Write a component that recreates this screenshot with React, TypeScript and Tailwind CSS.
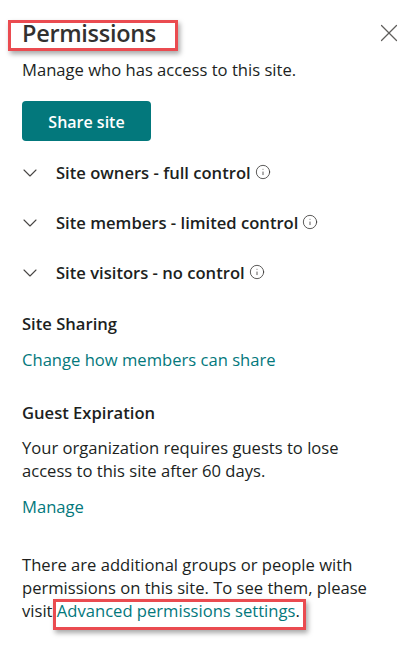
import { ChevronDown, Info, X } from "lucide-react";

const groups = [
  "Site owners - full control",
  "Site members - limited control",
  "Site visitors - no control",
];

function Callout({ className }: { className: string }) {
  return (
    <div
      className={`absolute border-[3px] border-[#ea4b50] shadow-[2px_3px_5px_rgba(0,0,0,0.35)] ${className}`}
    />
  );
}

export default function App() {
  return (
    <div className="relative h-[672px] w-[414px] overflow-hidden bg-white pl-[22px] pr-[10px] pt-[17px] font-['Open_Sans',sans-serif] text-[16.6px] text-[#201f1e]">
      <div className="flex h-[32px] items-center justify-between">
        <h1 className="pt-[1px] text-[23.5px] font-semibold tracking-[-0.3px] text-[#323130]">Permissions</h1>
        <X className="h-[30px] w-[30px] text-[#605e5c]" strokeWidth={0.95} />
      </div>

      <p className="mt-[9px] leading-[24px]">Manage who has access to this site.</p>

      <button className="mt-[19px] block h-[40px] w-[129px] rounded-[4px] bg-[#03787c] pt-[2px] text-[16px] font-semibold text-white">
        Share site
      </button>

      <ul className="mt-[20px] flex flex-col gap-[26px]">
        {groups.map((g) => (
          <li key={g} className="flex h-[24px] items-center font-semibold">
            <ChevronDown className="-ml-[4px] mr-[14px] h-[24px] w-[24px] text-[#484644]" strokeWidth={1.1} />
            <span>{g}</span>
            <Info className="mb-[3px] ml-[4px] h-[16px] w-[16px] text-[#323130]" strokeWidth={1.2} />
          </li>
        ))}
      </ul>

      <h2 className="mt-[27px] font-semibold leading-[24px]">Site Sharing</h2>
      <a className="mt-[12px] block leading-[24px] text-[#03787c]">Change how members can share</a>

      <h2 className="mt-[29px] font-semibold leading-[24px]">Guest Expiration</h2>
      <p className="mt-[11px] leading-[23px]">
        Your organization requires guests to lose
        <br />
        access to this site after 60 days.
      </p>
      <a className="mt-[13px] block leading-[24px] text-[#03787c]">Manage</a>

      <p className="mt-[34px] leading-[23px]">
        There are additional groups or people with
        <br />
        permissions on this site. To see them, please
        <br />
        visit <a className="text-[#03787c]">Advanced permissions settings</a>.
      </p>

      <Callout className="left-[8px] top-[20px] h-[31px] w-[170px]" />
      <Callout className="left-[53px] top-[599px] h-[31px] w-[253px]" />
    </div>
  );
}
